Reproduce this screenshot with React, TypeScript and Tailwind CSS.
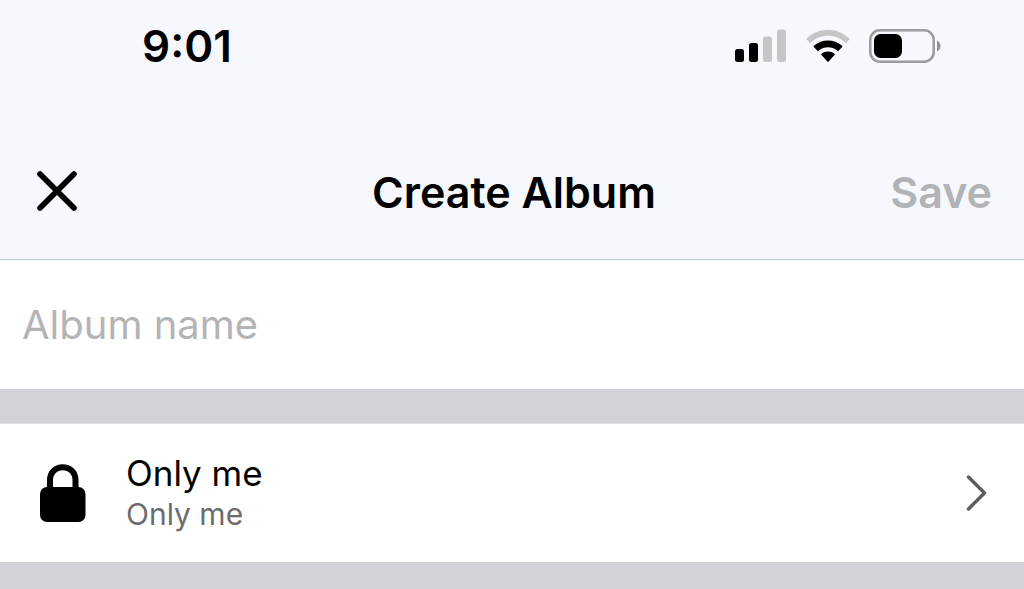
import { useState } from "react";

const SignalIcon = () => (
  <svg width="52" height="34" viewBox="0 0 52 34" aria-hidden="true">
    <rect x="0" y="20" width="9" height="13" rx="2.5" fill="#000" />
    <rect x="14" y="14" width="9" height="19" rx="2.5" fill="#000" />
    <rect x="28" y="7.5" width="9" height="25.5" rx="2.5" fill="#c6c6c8" />
    <rect x="42" y="0.5" width="9" height="32.5" rx="2.5" fill="#c6c6c8" />
  </svg>
);

const WifiIcon = () => (
  <svg width="44" height="34" viewBox="0 0 44 34" aria-hidden="true">
    <path
      d="M0.7 9.4 C12.5 -2.2 31.5 -2.2 43.3 9.4 Q43.8 10 43.3 10.6 L40.4 13.5 Q39.8 14 39.2 13.5 C29.5 4.4 14.5 4.4 4.8 13.5 Q4.2 14 3.6 13.5 L0.7 10.6 Q0.2 10 0.7 9.4 Z"
      fill="#c6c6c8"
    />
    <path
      d="M7.9 16.8 C15.7 9.6 28.3 9.6 36.1 16.8 Q36.7 17.4 36.1 18.1 L32.6 21.7 Q32 22.3 31.4 21.7 C26 17.2 18 17.2 12.6 21.7 Q12 22.3 11.4 21.7 L7.9 18.1 Q7.3 17.4 7.9 16.8 Z"
      fill="#000"
    />
    <path
      d="M15.5 24.8 C19.2 21.6 24.8 21.6 28.5 24.8 Q29.1 25.4 28.5 26.1 L22.6 32.4 Q22 33 21.4 32.4 L15.5 26.1 Q14.9 25.4 15.5 24.8 Z"
      fill="#000"
    />
  </svg>
);

const BatteryIcon = () => (
  <svg width="72" height="34" viewBox="0 0 72 34" aria-hidden="true">
    <rect x="1.3" y="1.3" width="63.4" height="31.4" rx="9.5" fill="none" stroke="#9c9c9e" strokeWidth="2.5" />
    <rect x="5" y="5" width="28" height="24" rx="6.5" fill="#000" />
    <path d="M68 11.5 C72.6 13.5 72.6 20.5 68 22.5 Z" fill="#929294" />
  </svg>
);

const CloseIcon = () => (
  <svg width="42" height="42" viewBox="0 0 42 42" aria-hidden="true">
    <path d="M4 3 L38 37 M38 3 L4 37" fill="none" stroke="#000" strokeWidth="5.6" strokeLinecap="round" />
  </svg>
);

const LockIcon = () => (
  <svg width="46" height="58" viewBox="0 0 46 58" aria-hidden="true">
    <path d="M10 26 V16 C10 -1 35.5 -1 35.5 16 V26" fill="none" stroke="#000" strokeWidth="6" />
    <rect x="0" y="23" width="45.5" height="35" rx="7" fill="#000" />
  </svg>
);

const ChevronIcon = () => (
  <svg width="22" height="36" viewBox="0 0 22 36" aria-hidden="true">
    <path d="M2.5 2 L18.5 18 L2.5 34" fill="none" stroke="#5c5c5e" strokeWidth="3.4" strokeLinecap="round" strokeLinejoin="round" />
  </svg>
);

const StatusBar = () => (
  <div className="flex h-[124px] items-center justify-between pb-8 pl-[142px] pr-[83px]">
    <time className="text-[44px] leading-none font-semibold">9:01</time>
    <div className="flex items-center gap-[19px]">
      <SignalIcon />
      <WifiIcon />
      <BatteryIcon />
    </div>
  </div>
);

const App = () => {
  const [name, setName] = useState("");

  return (
    <div className="min-h-screen bg-[#d1d2d7] font-[Inter,'Liberation_Sans',sans-serif] text-black">
      <header className="border-b border-[#b9c9d4] bg-[#f7f8fd]">
        <StatusBar />
        <div className="grid h-[135px] grid-cols-[1fr_auto_1fr] items-center pl-9 pr-8">
          <button type="button" aria-label="Close" className="justify-self-start">
            <CloseIcon />
          </button>
          <h1 className="text-[43px] leading-[44px] font-semibold">Create Album</h1>
          <button type="button" disabled={!name} className="justify-self-end text-[43px] leading-[44px] font-semibold text-[#b2b3b6]">
            Save
          </button>
        </div>
      </header>

      <main>
        <input
          type="text"
          aria-label="Album name"
          placeholder="Album name"
          value={name}
          onChange={(e) => setName(e.target.value)}
          className="block h-[129px] w-full bg-white px-[22px] text-[40px] outline-none placeholder:text-[#b4b4b6]"
        />

        <button
          type="button"
          className="mt-[34px] flex h-[139px] w-full items-center border-t border-[#e2e2e6] bg-white pl-10 pr-9 text-left"
        >
          <LockIcon />
          <span className="ml-10 flex flex-1 flex-col">
            <span className="text-[35px] leading-[42px]">Only me</span>
            <span className="text-[30px] leading-[40px] text-[#6c6c6e]">Only me</span>
          </span>
          <ChevronIcon />
        </button>
      </main>
    </div>
  );
};

export default App;
